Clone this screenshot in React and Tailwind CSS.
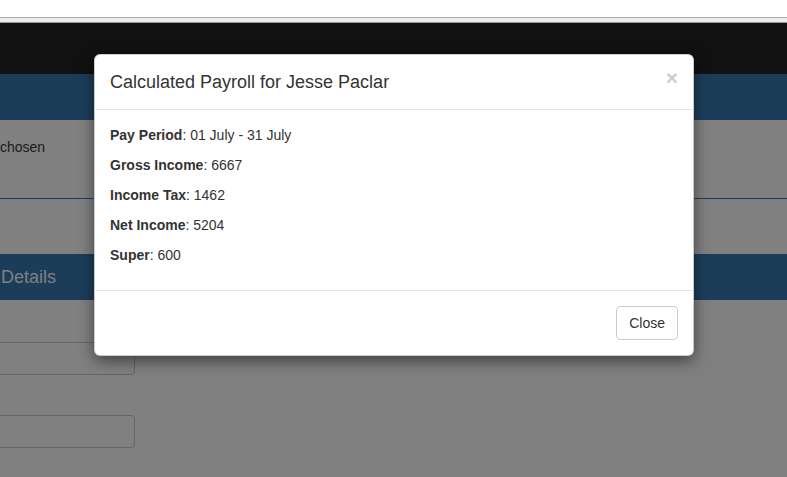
import React from 'react';

const rows = [
  { label: 'Pay Period', value: '01 July - 31 July' },
  { label: 'Gross Income', value: '6667' },
  { label: 'Income Tax', value: '1462' },
  { label: 'Net Income', value: '5204' },
  { label: 'Super', value: '600' },
];

const PayrollModal = () => (
  <div className="absolute left-[94px] top-[54px] w-[600px] rounded-[6px] border border-black/20 bg-white shadow-[0_5px_15px_rgba(0,0,0,0.5)] text-[#333]">
    <div className="flex items-start justify-between border-b border-[#e5e5e5] p-[15px]">
      <h4 className="text-[18px] leading-[24px]">Calculated Payroll for Jesse Paclar</h4>
      <button className="-mt-[3px] text-[21px] font-bold leading-none text-black opacity-20">×</button>
    </div>
    <div className="p-[15px] text-[14px] leading-[20px]">
      {rows.map((row) => (
        <p key={row.label} className="mb-[10px]">
          <b>{row.label}</b>: {row.value}
        </p>
      ))}
    </div>
    <div className="flex justify-end border-t border-[#e5e5e5] p-[15px]">
      <button className="rounded-[4px] border border-[#ccc] bg-white px-[12px] py-[6px] text-[14px] leading-[20px] text-[#333]">
        Close
      </button>
    </div>
  </div>
);

export default function App() {
  return (
    <div className="relative h-[477px] w-[787px] overflow-hidden bg-[#808080] font-['Liberation_Sans',Arial,sans-serif]">
      <div className="h-[17px] bg-white" />
      <div className="h-px bg-[#a9a9a9]" />
      <div className="h-[4px] bg-[#ececec]" />
      <div className="h-px bg-[#9a9a9a]" />
      <div className="h-[51px] bg-[#111]" />
      <div className="h-[46px] bg-[#1c3d5a]" />

      <div className="h-[78px] pt-[17px] text-[14px] leading-[20px] text-[#1a1a1a]">
        <span>chosen</span>
      </div>
      <div className="h-px bg-[#1c3d5a]" />

      <div className="mt-[55px] flex h-[46px] items-center bg-[#1c3d5a] text-[18px] text-[#808080]">
        <span className="ml-[1px]">Details</span>
      </div>

      <div className="flex flex-col pt-[42px]">
        <div className="-ml-[10px] h-[33px] w-[145px] rounded-[4px] border border-[#666]" />
        <div className="-ml-[10px] mt-[40px] h-[33px] w-[145px] rounded-[4px] border border-[#666]" />
      </div>

      <PayrollModal />
    </div>
  );
}
